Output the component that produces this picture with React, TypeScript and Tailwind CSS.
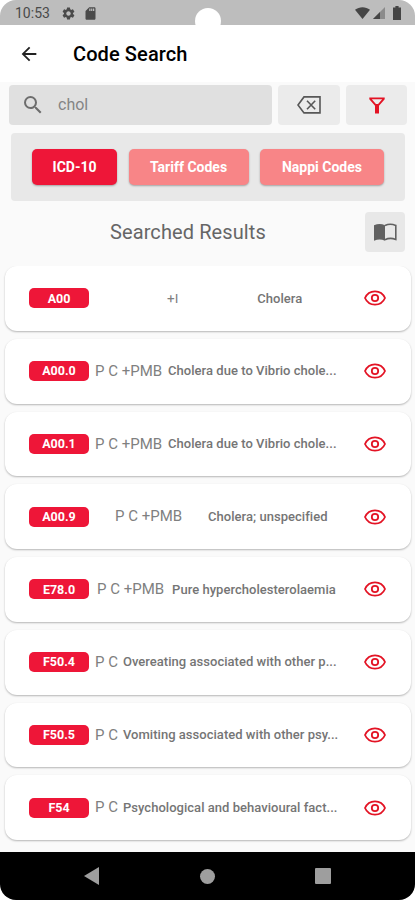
import React, { useState } from 'react';
import { MdArrowBack, MdSdCard, MdSearch, MdSettings } from 'react-icons/md';
import { clsx } from 'clsx';

interface CodeResult {
  code: string;
  flags: string;
  description: string;
  flagsClass: string;
  descriptionClass: string;
}

const TABS = [
  { label: 'ICD-10', width: 'w-[85px]' },
  { label: 'Tariff Codes', width: 'w-[120px]' },
  { label: 'Nappi Codes', width: 'w-[124px]' },
];

const RESULTS: CodeResult[] = [
  { code: 'A00', flags: '+I', description: 'Cholera', flagsClass: 'ml-[78px] text-[13.5px]', descriptionClass: 'ml-[79px]' },
  { code: 'A00.0', flags: 'P C +PMB', description: 'Cholera due to Vibrio chole...', flagsClass: 'ml-1.5 text-[15px]', descriptionClass: 'ml-1.5' },
  { code: 'A00.1', flags: 'P C +PMB', description: 'Cholera due to Vibrio chole...', flagsClass: 'ml-1.5 text-[15px]', descriptionClass: 'ml-1.5' },
  { code: 'A00.9', flags: 'P C +PMB', description: 'Cholera; unspecified', flagsClass: 'ml-[26px] text-[15px]', descriptionClass: 'ml-[26px]' },
  { code: 'E78.0', flags: 'P C +PMB', description: 'Pure hypercholesterolaemia', flagsClass: 'ml-2 text-[15px]', descriptionClass: 'ml-2' },
  { code: 'F50.4', flags: 'P C', description: 'Overeating associated with other p...', flagsClass: 'ml-1.5 text-[15px]', descriptionClass: 'ml-[5px]' },
  { code: 'F50.5', flags: 'P C', description: 'Vomiting associated with other psy...', flagsClass: 'ml-1.5 text-[15px]', descriptionClass: 'ml-[5px]' },
  { code: 'F54', flags: 'P C', description: 'Psychological and behavioural fact...', flagsClass: 'ml-1.5 text-[15px]', descriptionClass: 'ml-[5px]' },
];

function EyeIcon() {
  return (
    <svg width="22" height="16" viewBox="0 0 22 16" fill="none" stroke="#e31324" strokeWidth="1.8">
      <path d="M1 8C2.9 3.6 6.5 1.3 11 1.3S19.1 3.6 21 8c-1.9 4.4-5.5 6.7-10 6.7S2.9 12.4 1 8Z" />
      <circle cx="11" cy="8" r="3.2" />
    </svg>
  );
}

function ClearIcon() {
  return (
    <svg width="24" height="18" viewBox="0 0 24 18" fill="none" stroke="#575757" strokeWidth="1.6">
      <path d="M7 .9h16v16H7L1 9Z" />
      <path d="m10 4.8 8.2 8.4M18.2 4.8 10 13.2" />
    </svg>
  );
}

function FilterIcon() {
  return (
    <svg width="16" height="17" viewBox="0 0 16 17" fill="#e31324">
      <path
        d="M.3.6h15.4v1.6L10 8.7v7.8H6V8.7L.3 2.2ZM2.8 2.3 6.9 7h2.2l4.1-4.7Z"
        fillRule="evenodd"
      />
    </svg>
  );
}

function BookIcon() {
  return (
    <svg width="24" height="19" viewBox="0 0 24 19" fill="none">
      <path d="M1 2.2C4.8.6 8.5.6 12 2.2v15.6c-3.5-1.6-7.2-1.6-11 0Z" fill="#616161" />
      <path d="M12 2.4c3.5-1.6 7-1.6 10.8 0v14c-3.8-1.4-7.3-1.4-10.8.3" stroke="#616161" strokeWidth="1.6" />
    </svg>
  );
}

function StatusBar() {
  return (
    <div className="relative flex h-[25px] shrink-0 items-center justify-between rounded-t-[16px] bg-[#bdbdbd] pl-[15px] pr-[14px] text-[#4a4a4a]">
      <div className="flex items-center pt-0.5">
        <span className="w-[46px] text-[14px]">10:53</span>
        <MdSettings className="size-[15px]" />
        <MdSdCard className="ml-[7px] size-[15px]" />
      </div>
      <div className="flex items-center pt-px">
        <svg width="15" height="12" viewBox="0 0 15 12" fill="#454545">
          <path d="M0 2.8C4.4-.7 10.6-.7 15 2.8L7.5 12Z" />
        </svg>
        <svg className="ml-[3px]" width="12" height="12" viewBox="0 0 12 12">
          <path d="M12 0v12H0Z" fill="#8b8b8b" />
          <path d="M7 5v7H0Z" fill="#454545" />
        </svg>
        <svg className="ml-2" width="8" height="14" viewBox="0 0 8 14" fill="#454545">
          <path d="M2.4 0h3.2v1.5H8V14H0V1.5h2.4Z" />
        </svg>
      </div>
      {/* Camera cutout */}
      <div className="absolute left-[195px] top-2 size-[26px] rounded-full bg-white" />
    </div>
  );
}

function ResultCard({ result }: { result: CodeResult }) {
  return (
    <div className="flex h-[64.75px] shrink-0 items-center rounded-[12px] bg-white pl-6 pr-[25px] shadow-[0_1px_2px_rgba(0,0,0,0.28)]">
      <span className="flex h-5 w-[60px] shrink-0 items-center justify-center rounded-[5px] bg-[#ee1638] pt-px text-[12.5px] font-bold text-white">
        {result.code}
      </span>
      <span className={clsx('whitespace-nowrap text-[#808080]', result.flagsClass)}>
        {result.flags}
      </span>
      <span
        className={clsx(
          'whitespace-nowrap text-[13px] font-medium tracking-[0.03px] text-[#757575]',
          result.descriptionClass
        )}
      >
        {result.description}
      </span>
      <button className="ml-auto" aria-label="View">
        <EyeIcon />
      </button>
    </div>
  );
}

export default function App() {
  const [query, setQuery] = useState('chol');
  const [activeTab, setActiveTab] = useState('ICD-10');

  return (
    <div className="h-[900px] w-[415px] overflow-hidden bg-white font-['Roboto',sans-serif]">
      <div className="flex h-full flex-col overflow-hidden rounded-b-[16px] bg-[#fafafa]">
        <div className="shrink-0 bg-white">
          <StatusBar />
        </div>

        {/* Header */}
        <header className="flex h-[57px] shrink-0 items-center bg-white pl-[18px]">
          <MdArrowBack className="size-[22px] text-[#222]" />
          <h1 className="ml-[33px] text-[20px] font-medium tracking-[0.1px] text-black">Code Search</h1>
        </header>

        {/* Search */}
        <div className="mt-[3px] flex h-[40px] shrink-0 gap-1.5 pl-[9px] pr-2">
          <div className="flex flex-1 items-center rounded-[4px] bg-[#e0e0e0] pl-3">
            <MdSearch className="size-6 shrink-0 text-[#6d6d6d]" />
            <input
              type="text"
              value={query}
              onChange={e => setQuery(e.target.value)}
              className="ml-[13px] w-40 bg-transparent text-[16px] text-[#858585] outline-none"
            />
          </div>
          <button
            className="flex w-[62px] items-center justify-center rounded-[4px] bg-[#ebebeb]"
            onClick={() => setQuery('')}
            aria-label="Clear"
          >
            <ClearIcon />
          </button>
          <button className="flex w-[61px] items-center justify-center rounded-[4px] bg-[#ebebeb]" aria-label="Filter">
            <FilterIcon />
          </button>
        </div>

        {/* Code types */}
        <div className="ml-[11px] mr-2.5 mt-2 flex h-[68px] shrink-0 items-center justify-center gap-[11.5px] rounded-[4px] bg-[#e8e8e8]">
          {TABS.map(tab => (
            <button
              key={tab.label}
              onClick={() => setActiveTab(tab.label)}
              className={clsx(
                'h-9 rounded-[5px] pt-px text-[14px] font-bold text-white shadow-[0_1px_2px_rgba(0,0,0,0.3)]',
                tab.width,
                activeTab === tab.label ? 'bg-[#ee1638]' : 'bg-[#f88587]'
              )}
            >
              {tab.label}
            </button>
          ))}
        </div>

        <div className="mt-2.5 flex h-[41px] shrink-0 items-center pr-2.5">
          <h2 className="ml-[110px] text-[20px] tracking-[0.1px] text-[#666]">Searched Results</h2>
          <button className="ml-auto flex size-10 items-center justify-center rounded-[4px] bg-[#e8e8e8] pt-0.5" aria-label="Library">
            <BookIcon />
          </button>
        </div>

        {/* Results */}
        <div className="mt-3.5 flex flex-1 flex-col gap-2 overflow-hidden pl-[5px] pr-1">
          {RESULTS.map(result => (
            <ResultCard key={result.code} result={result} />
          ))}
        </div>

        {/* System navigation */}
        <nav className="flex h-12 shrink-0 items-center justify-between bg-black pl-[84px] pr-[84px]">
          <svg width="15" height="18" viewBox="0 0 15 18" fill="#9e9e9e">
            <path d="M15 0v18L0 9Z" />
          </svg>
          <span className="size-[15px] rounded-full bg-[#9e9e9e]" />
          <span className="size-4 rounded-[1px] bg-[#9e9e9e]" />
        </nav>
      </div>
    </div>
  );
}
